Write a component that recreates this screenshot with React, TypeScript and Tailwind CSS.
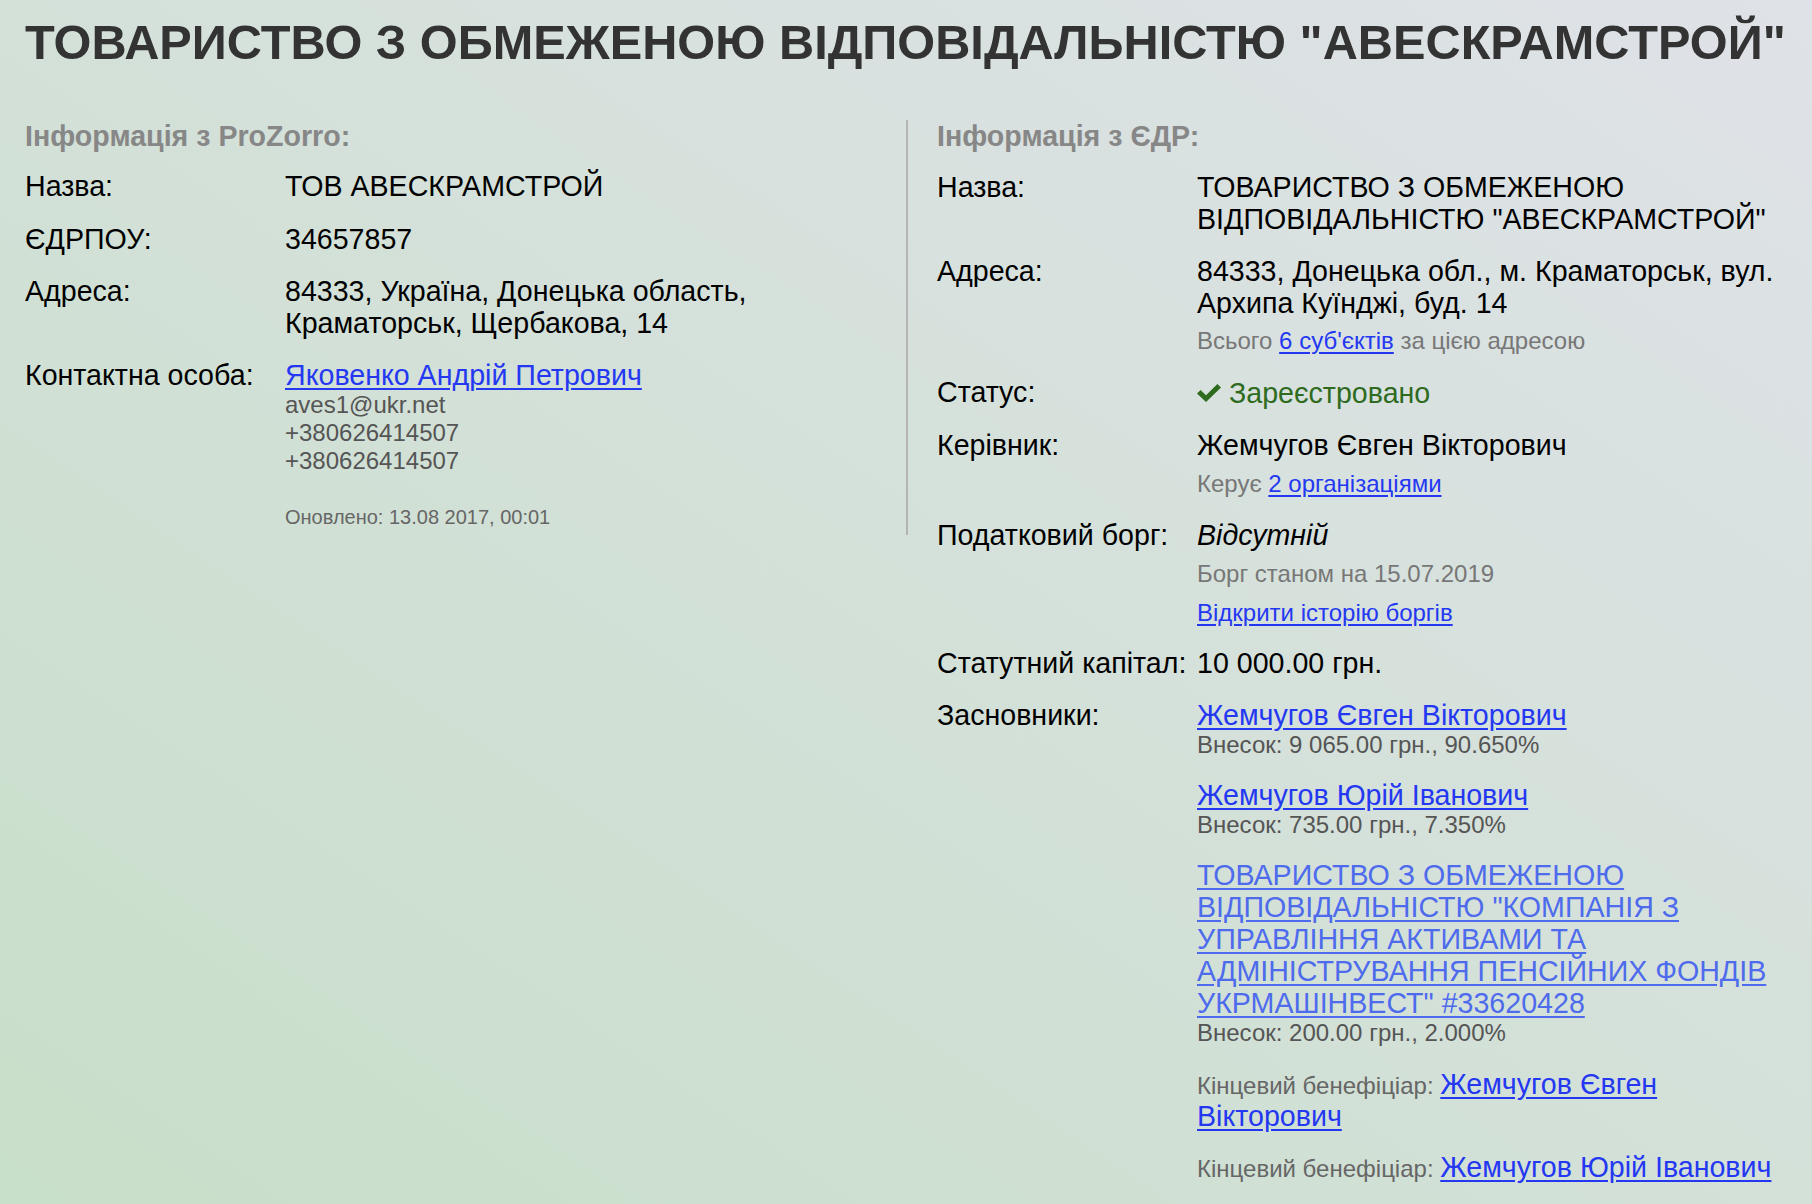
import React from "react";

const linkCls = "text-[#2438f2] underline underline-offset-[3px]";

function Row({
  label,
  children,
  className = "mt-[20px]",
}: {
  label: string;
  children: React.ReactNode;
  className?: string;
}) {
  return (
    <div className={`flex ${className}`}>
      <div className="w-[260px] shrink-0 whitespace-nowrap">{label}</div>
      <div className="flex-1 min-w-0">{children}</div>
    </div>
  );
}

function CheckMark() {
  return (
    <svg
      viewBox="0 0 24 18"
      className="w-[24px] h-[18px] mr-[8px] inline-block"
      fill="#2f6b1f"
    >
      <path d="M0 9.6 L3.6 6 L9 11.2 L20.4 0 L24 3.6 L9 18 Z" />
    </svg>
  );
}

export default function App() {
  return (
    <div className="min-h-screen bg-linear-to-tr from-[#c8dfc9] to-[#dfe2e8] px-[25px] pb-[20px] font-['Liberation_Sans',Arial,sans-serif] text-black">
      {/* Header */}
      <h1 className="pt-[12px] text-[48.7px] leading-[60px] font-bold text-[#333333] whitespace-nowrap">
        ТОВАРИСТВО З ОБМЕЖЕНОЮ ВІДПОВІДАЛЬНІСТЮ "АВЕСКРАМСТРОЙ"
      </h1>

      <div className="mt-[48px] grid grid-cols-[883px_1fr] items-start text-[28.6px] leading-[32px]">
        {/* ProZorro */}
        <div className="border-r-2 border-[#b4b4b4] pb-[6px]">
          <h2 className="font-bold text-[#878787]">Інформація з ProZorro:</h2>
          <Row label="Назва:" className="mt-[18px]">
            ТОВ АВЕСКРАМСТРОЙ
          </Row>
          <Row label="ЄДРПОУ:" className="mt-[21px]">
            34657857
          </Row>
          <Row label="Адреса:">
            84333, Україна, Донецька область,
            <br />
            Краматорськ, Щербакова, 14
          </Row>
          <Row label="Контактна особа:">
            <a href="#" className={linkCls}>
              Яковенко Андрій Петрович
            </a>
            <div className="text-[24px] leading-[28px] text-[#555555]">
              <div>aves1@ukr.net</div>
              <div>+380626414507</div>
              <div>+380626414507</div>
            </div>
            <div className="mt-[30px] text-[20px] leading-[24px] text-[#666666]">
              Оновлено: 13.08 2017, 00:01
            </div>
          </Row>
        </div>

        {/* EDR */}
        <div className="pl-[29px]">
          <h2 className="font-bold text-[#878787]">Інформація з ЄДР:</h2>
          <Row label="Назва:" className="mt-[19px]">
            ТОВАРИСТВО З ОБМЕЖЕНОЮ ВІДПОВІДАЛЬНІСТЮ "АВЕСКРАМСТРОЙ"
          </Row>
          <Row label="Адреса:">
            84333, Донецька обл., м. Краматорськ, вул. Архипа Куїнджі, буд. 14
            <div className="mt-[8px] text-[24px] leading-[28px] text-[#777777]">
              Всього{" "}
              <a href="#" className={linkCls}>
                6 суб'єктів
              </a>{" "}
              за цією адресою
            </div>
          </Row>
          <Row label="Статус:" className="mt-[21px]">
            <span className="inline-flex items-center text-[#2f6b1f]">
              <CheckMark />
              Зареєстровано
            </span>
          </Row>
          <Row label="Керівник:">
            Жемчугов Євген Вікторович
            <div className="mt-[9px] text-[24px] leading-[28px] text-[#777777]">
              Керує{" "}
              <a href="#" className={linkCls}>
                2 організаціями
              </a>
            </div>
          </Row>
          <Row label="Податковий борг:" className="mt-[21px]">
            <i>Відсутній</i>
            <div className="mt-[9px] text-[24px] leading-[28px] text-[#777777]">
              Борг станом на 15.07.2019
            </div>
            <div className="mt-[11px] text-[24px] leading-[28px]">
              <a href="#" className={linkCls}>
                Відкрити історію боргів
              </a>
            </div>
          </Row>
          <Row label="Статутний капітал:">10 000.00 грн.</Row>
          <Row label="Засновники:">
            <div>
              <a href="#" className={linkCls}>
                Жемчугов Євген Вікторович
              </a>
              <div className="text-[24px] leading-[28px] text-[#555555]">
                Внесок: 9 065.00 грн., 90.650%
              </div>
            </div>
            <div className="mt-[20px]">
              <a href="#" className={linkCls}>
                Жемчугов Юрій Іванович
              </a>
              <div className="text-[24px] leading-[28px] text-[#555555]">
                Внесок: 735.00 грн., 7.350%
              </div>
            </div>
            <div className="mt-[20px]">
              <a href="#" className="text-[#4d6bec] underline underline-offset-[3px]">
                ТОВАРИСТВО З ОБМЕЖЕНОЮ ВІДПОВІДАЛЬНІСТЮ "КОМПАНІЯ З УПРАВЛІННЯ
                АКТИВАМИ ТА АДМІНІСТРУВАННЯ ПЕНСІЙНИХ ФОНДІВ УКРМАШІНВЕСТ"
                #33620428
              </a>
              <div className="text-[24px] leading-[28px] text-[#555555]">
                Внесок: 200.00 грн., 2.000%
              </div>
            </div>
            <div className="mt-[21px]">
              <span className="text-[24px] leading-[24px] text-[#666666]">
                Кінцевий бенефіціар:{" "}
              </span>
              <a href="#" className={linkCls}>
                Жемчугов Євген Вікторович
              </a>
            </div>
            <div className="mt-[19px]">
              <span className="text-[24px] leading-[24px] text-[#666666]">
                Кінцевий бенефіціар:{" "}
              </span>
              <a href="#" className={linkCls}>
                Жемчугов Юрій Іванович
              </a>
            </div>
          </Row>
        </div>
      </div>
    </div>
  );
}
